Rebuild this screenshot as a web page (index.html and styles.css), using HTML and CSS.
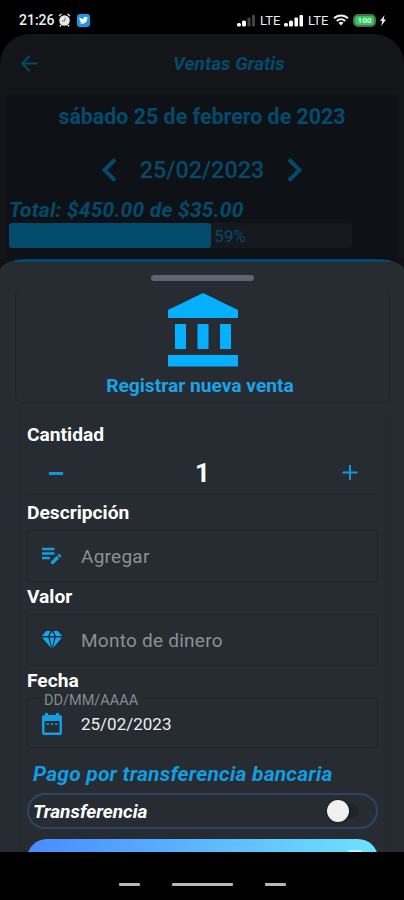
FILE: index.html
```
<!DOCTYPE html>
<html lang="es">
<head>
    <meta charset="UTF-8">
    <meta name="viewport" content="width=device-width, initial-scale=1.0">
    <title>Ventas Gratis</title>
    <link rel="stylesheet" href="styles.css">
</head>
<body>
    <div class="status-bar">
        <span class="clock">21:26</span>
        <svg class="alarm" width="13" height="14" viewBox="0 0 13 14">
            <path d="M1 3l2.500-2M12 3L9.500 1M3 12l-1 1.500M10 12l1 1.500" stroke="#ddd" stroke-width="1.500"/>
            <circle cx="6.500" cy="7.500" r="5.300" fill="#e8e8e8"/>
            <path d="M7 4.500v3.500H4" fill="none" stroke="#777" stroke-width="1"/>
        </svg>
        <svg class="bird" width="13" height="13" viewBox="0 0 13 13">
            <rect width="13" height="13" rx="3" fill="#1d96e8"/>
            <path d="M2.500 3.200c1 1.200 2.300 1.800 3.800 1.900C6.200 3 8.400 2 9.700 3.400l1.300-.3-.8 1.300c.1 3.600-3.500 6.500-7.700 4.700 1 0 1.700-.2 2.300-.7-1-.2-1.500-.7-1.700-1.400h.7C2.700 6.500 2.300 5.500 2.500 3.200z" fill="#fff"/>
        </svg>
        <div class="status-right">
            <svg width="19" height="13" viewBox="0 0 19 13">
                <g fill="#fff"><rect x="0" y="9" width="4" height="3.500" rx="1.500"/><rect x="5" y="6.500" width="4" height="6" rx="1.500"/></g>
                <g fill="#444"><rect x="10.500" y="3.500" width="3" height="9" rx="1"/><rect x="15" y="1" width="3" height="11.500" rx="1"/></g>
            </svg>
            <span class="lte">LTE</span>
            <svg width="19" height="13" viewBox="0 0 19 13">
                <g fill="#fff"><rect x="0" y="9" width="4" height="3.500" rx="1.500"/><rect x="5" y="6.500" width="4" height="6" rx="1.500"/><rect x="10.500" y="3.500" width="3.500" height="9" rx="1"/><rect x="15.500" y="1" width="3.500" height="11.500" rx="1"/></g>
            </svg>
            <span class="lte second">LTE</span>
            <svg class="wifi" width="16" height="12" viewBox="0 0 16 12">
                <path d="M1 4.300c4-3.900 10-3.900 14 0M3.800 7c2.500-2.400 5.900-2.400 8.400 0" fill="none" stroke="#eee" stroke-width="2"/>
                <path d="M5.500 8.700c1.500-1.300 3.500-1.300 5 0L8 11.500z" fill="#eee"/>
            </svg>
            <span class="battery">100</span>
            <svg class="bolt" width="6" height="11" viewBox="0 0 6 11"><path d="M4.500 0L0 6h2.200L1.200 11 6 4.500H3.700z" fill="#eee"/></svg>
        </div>
    </div>

    <div class="app">
        <header class="app-header">
            <svg class="back" width="17" height="17" viewBox="0 0 17 17">
                <path d="M16.500 8.500H1.500M8.500 1L1.200 8.500 8.500 16" fill="none" stroke="#034b6c" stroke-width="2"/>
            </svg>
            <h1>Ventas Gratis</h1>
        </header>
        <div class="day-panel">
            <div class="day-name">sábado 25 de febrero de 2023</div>
            <div class="day-picker">
                <svg width="15" height="24" viewBox="0 0 15 24"><path d="M13 1.500L2.500 12 13 22.500" fill="none" stroke="#034b6c" stroke-width="4"/></svg>
                <span>25/02/2023</span>
                <svg width="15" height="24" viewBox="0 0 15 24"><path d="M2 1.500L12.500 12 2 22.500" fill="none" stroke="#034b6c" stroke-width="4"/></svg>
            </div>
            <div class="total">Total: $450.00 de $35.00</div>
            <div class="progress">
                <div class="progress-fill"></div>
                <span>59%</span>
            </div>
        </div>
    </div>

    <div class="sheet-area">
        <div class="sheet">
            <div class="handle"></div>
            <div class="hero">
                <svg width="70" height="74" viewBox="0 0 70 74" fill="#06afff">
                    <path d="M35 0l35 17v8H0v-8z"/>
                    <path d="M7 31h11v25H7zM29.500 31h11v25h-11zM52 31h11v25H52z"/>
                    <path d="M0 62h70v11.500H0z"/>
                </svg>
                <h2>Registrar nueva venta</h2>
            </div>
            <div class="form">
                <label>Cantidad</label>
                <div class="stepper">
                    <svg width="14" height="16" viewBox="0 0 14 16"><path d="M0 8.500h14" stroke="#1596d5" stroke-width="3"/></svg>
                    <span>1</span>
                    <svg width="16" height="16" viewBox="0 0 16 16"><path d="M8 0v15M.500 7.500h15" stroke="#1596d5" stroke-width="2"/></svg>
                </div>

                <label>Descripción</label>
                <div class="field">
                    <svg width="20" height="18" viewBox="0 0 20 18">
                        <path d="M0 2h12.500M0 6.500h12.500M0 11h8" stroke="#149de0" stroke-width="2.500"/>
                        <path d="M9 14.500v2.500h2.500l5.700-5.700-2.500-2.500zM15.500 8l2.500 2.500 1.600-1.600-2.500-2.500z" fill="#149de0"/>
                    </svg>
                    <span>Agregar</span>
                </div>

                <label>Valor</label>
                <div class="field">
                    <svg width="20" height="18" viewBox="0 0 20 18">
                        <path d="M4 0h4.500L6 5H0zM10 .500L12.500 5h-5zM11.500 0H16l4 5h-6zM0 6.500h6.300l2.700 10.500zM7.800 6.500h4.400L10 17zM13.700 6.500H20L11 17z" fill="#0caaf7"/>
                    </svg>
                    <span>Monto de dinero</span>
                </div>

                <label>Fecha</label>
                <div class="field date">
                    <em>DD/MM/AAAA</em>
                    <svg width="20" height="22" viewBox="0 0 20 22">
                        <path fill-rule="evenodd" d="M3 0h3v2h8V0h3v2h1q2 0 2 2v16q0 2-2 2H2q-2 0-2-2V4q0-2 2-2h1zM2.500 8v11.500h15V8z" fill="#149de0"/>
                        <path d="M4.500 11h2.500M8.800 11h2.500M13 11h2.500" stroke="#149de0" stroke-width="1.500"/>
                    </svg>
                    <span>25/02/2023</span>
                </div>

                <h3>Pago por transferencia bancaria</h3>
                <div class="transfer">
                    <span>Transferencia</span>
                    <div class="switch"><i></i></div>
                </div>
                <div class="save-btn"><i></i></div>
            </div>
        </div>
    </div>

    <nav class="nav-bar">
        <i></i>
        <i class="home"></i>
        <i></i>
    </nav>
</body>
</html>
```
FILE: styles.css
```
:root {
    --accent: #149de0;
    --accent-dim: #034b6c;
    --sheet-bg: #262c32;
    --line: #1c2329;
}

* {
    box-sizing: border-box;
}

body {
    margin: 0;
    width: 404px;
    height: 900px;
    overflow: hidden;
    background: #000;
    font-family: Roboto, "Liberation Sans", sans-serif;
    display: flex;
    flex-direction: column;
}

h1, h2, h3 {
    margin: 0;
}

svg {
    display: block;
    flex: none;
}

/* status bar */
.status-bar {
    height: 34px;
    flex: none;
    display: flex;
    align-items: center;
    padding: 6px 18px 0 19px;
    color: #eee;
}

.clock {
    width: 36px;
    font-size: 14px;
    font-weight: 500;
    white-space: nowrap;
}

.alarm {
    margin-left: 3px;
}

.bird {
    margin-left: 6px;
}

.status-right {
    margin-left: auto;
    display: flex;
    align-items: center;
}

.lte {
    width: 22px;
    margin: 0 2px 0 4px;
    font-size: 13px;
}

.lte.second {
    margin: 0 3px 0 5px;
}

.battery {
    width: 23px;
    height: 13px;
    margin: 0 4px 0 4px;
    border: 2px solid #477050;
    border-radius: 5px;
    background: #35c759;
    color: #d9ffe0;
    font-size: 8px;
    font-weight: bold;
    line-height: 9px;
    text-align: center;
}

/* dimmed page behind the sheet */
.app {
    height: 225px;
    flex: none;
    background: #141519;
    border-radius: 30px 30px 0 0;
    color: var(--accent-dim);
}

.app-header {
    height: 61px;
    display: flex;
    align-items: center;
    padding: 0 21px 2px;
}

.app-header h1 {
    margin-left: 135px;
    font-size: 19px;
    font-style: italic;
    font-weight: bold;
    white-space: nowrap;
}

.day-panel {
    height: 164px;
    margin: 0 6px;
    padding: 8px 3px 0;
    background: #0e1115;
}

.day-name {
    height: 26px;
    line-height: 27px;
    font-size: 21.4px;
    font-weight: bold;
    text-align: center;
    white-space: nowrap;
}

.day-picker {
    height: 30px;
    margin-top: 26px;
    display: flex;
    align-items: center;
    justify-content: center;
    gap: 23px;
    font-size: 23.4px;
    font-weight: 500;
}

.total {
    height: 24px;
    margin-top: 13px;
    line-height: 24px;
    font-size: 21px;
    letter-spacing: 0.2px;
    font-weight: bold;
    font-style: italic;
    white-space: nowrap;
}

.progress {
    width: 343px;
    height: 25px;
    display: flex;
    align-items: center;
    background: #15181c;
    margin-top: 1px;
    border-radius: 3px;
    font-size: 17px;
}

.progress-fill {
    width: 59%;
    height: 25px;
    margin-right: 3px;
    background: #034b6c;
    border-radius: 3px;
}

/* bottom sheet */
.sheet-area {
    height: 593px;
    flex: none;
    background: #0e1115;
    overflow: hidden;
}

.sheet {
    height: 593px;
    padding-top: 16px;
    background: linear-gradient(#034b6c, #034b6c) 14px 0 / 376px 3px no-repeat var(--sheet-bg);
    border-radius: 28px 28px 0 0 / 11px 11px 0 0;
}

.handle {
    width: 103px;
    height: 6px;
    margin: 0 auto;
    border-radius: 3px;
    background: #5d6472;
}

.hero {
    height: 115px;
    margin: 7px 14px 0 15px;
    padding-top: 5px;
    display: flex;
    flex-direction: column;
    align-items: center;
    border: 1px solid #20262b;
    border-top: none;
    border-radius: 8px;
}

.hero h2 {
    margin: 8px 5px 0 0;
    line-height: 22px;
    font-size: 19.2px;
    color: #1ba3e8;
    white-space: nowrap;
}

.form {
    height: 440px;
    margin: 9px 18px 0 20px;
    padding: 11px 7px 0 6px;
    display: flex;
    flex-direction: column;
    border: 1px solid #22292e;
    border-top: none;
}

.form label {
    height: 22px;
    flex: none;
    margin-bottom: 7px;
    line-height: 24px;
    font-size: 19.2px;
    font-weight: bold;
    color: #fff;
}

.stepper {
    height: 46px;
    flex: none;
    margin: -3px 0 6px;
    padding: 2px 20px 0 22px;
    display: flex;
    align-items: center;
    justify-content: space-between;
    border-bottom: 1px solid #20262b;
    font-size: 26px;
    font-weight: bold;
    color: #fff;
}

.field {
    height: 52px;
    flex: none;
    margin-bottom: 3px;
    padding-left: 14px;
    display: flex;
    align-items: center;
    border: 1px solid var(--line);
    border-radius: 4px;
    font-size: 19px;
    letter-spacing: 0.25px;
    color: #8b9195;
}

.field span {
    margin-left: 19px;
}

.field.date {
    position: relative;
    height: 50px;
    margin-bottom: 14px;
    padding-top: 2px;
    font-size: 17px;
    letter-spacing: 0;
    color: #eee;
}

/* floating label sits on the border */
.field em {
    position: absolute;
    top: -6px;
    left: 13px;
    padding: 0 3px;
    background: var(--sheet-bg);
    font-size: 14.5px;
    line-height: 16px;
    font-style: normal;
    color: #858b90;
}

.form h3 {
    height: 24px;
    flex: none;
    margin: 0 0 7px 6px;
    line-height: 24px;
    font-size: 21px;
    letter-spacing: 0.2px;
    font-style: italic;
    color: var(--accent);
    white-space: nowrap;
}

.transfer {
    height: 36px;
    flex: none;
    padding: 0 17px 0 4px;
    display: flex;
    align-items: center;
    justify-content: space-between;
    border: 2px solid #2d4467;
    border-radius: 18px;
    font-size: 19px;
    font-weight: bold;
    font-style: italic;
    color: #fff;
}

.switch {
    width: 32px;
    height: 14px;
    display: flex;
    align-items: center;
    border-radius: 7px;
    background: #1f2429;
}

.switch i {
    width: 22px;
    height: 22px;
    flex: none;
    border-radius: 50%;
    background: #f0f0f0;
    box-shadow: 0 0 2px #000;
}

.save-btn {
    height: 40px;
    flex: none;
    margin-top: 10px;
    padding: 11px 16px 0;
    border-radius: 20px;
    background: linear-gradient(90deg, #4a8bff, #6de3ff);
}

.save-btn i {
    display: block;
    width: 14px;
    height: 4px;
    margin-left: auto;
    border-radius: 2px;
    background: #c5f4ff;
}

/* system navigation */
.nav-bar {
    height: 48px;
    flex: none;
    display: flex;
    align-items: center;
    justify-content: center;
    gap: 32px;
    padding-top: 16px;
}

.nav-bar i {
    width: 21px;
    height: 3px;
    border-radius: 1px;
    background: #b8b8b8;
}

.nav-bar .home {
    width: 61px;
}
```
